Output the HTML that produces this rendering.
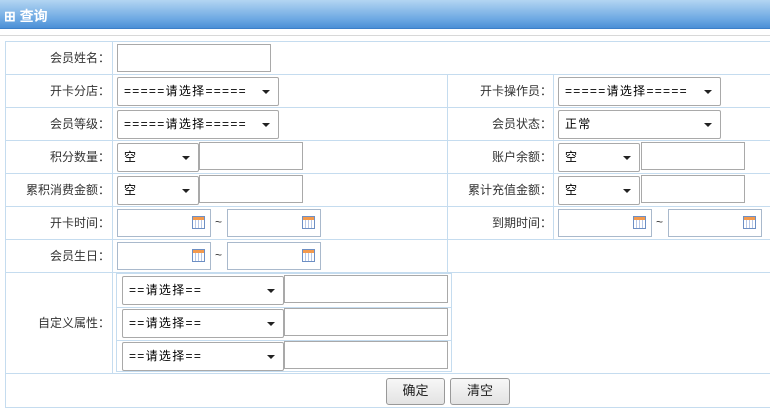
<!DOCTYPE html><html><head><meta charset="utf-8"><style>
*{box-sizing:border-box;margin:0;padding:0}
body{width:770px;height:414px;background:#fff;position:relative;overflow:hidden;font-family:"Liberation Sans","Noto Sans CJK SC",sans-serif;font-size:12px;color:#333}
.a{position:absolute}
.hd{left:0;top:0;width:770px;height:29px;background:linear-gradient(#b3d5f2,#6ba7e2 70%,#4b8fd6);border-bottom:1px solid #3c7fc8}
.hd span{position:absolute;left:4px;top:6px;color:#fff;font-weight:bold;font-size:14px}
.hl{height:1px;background:#c5dcef;left:5px;width:765px}
.vl{width:1px;background:#c5dcef}
.lb{text-align:right;width:100px;line-height:35px;height:33px}
.inp{border:1px solid #a9a9a9;background:#fff}
.sel{border:1px solid #a9a9a9;border-radius:2px;background:#fff;color:#000;line-height:27px;padding-left:6px;font-size:12px;letter-spacing:1.3px}
.sel:after{content:"";position:absolute;right:8px;top:12px;border:4px solid transparent;border-top:4px solid #222;border-bottom:0}
.dt{border:1px solid #a9b9cc;background:#fff}
.cal{position:absolute;right:5px;top:6px;width:13px;height:13px;border:1px solid #6d8fc4;background:repeating-linear-gradient(90deg,#fff 0 2px,#b8c8e6 2px 3px);}
.cal:before{content:"";position:absolute;left:0;top:0;width:11px;height:3px;background:#f39a4e}
.btn{border:1px solid #999;border-radius:3px;background:linear-gradient(#f7f7f7,#e3e3e3);text-align:center;line-height:24px;font-size:13px;color:#222}
</style></head><body>
<div class="a hd"><span>⊞ 查询</span></div>
<div class="a" style="left:0;top:35px;width:770px;height:1px;background:#d8d8d8"></div>
<div class="a hl" style="top:41px"></div>
<div class="a hl" style="top:74px"></div>
<div class="a hl" style="top:107px"></div>
<div class="a hl" style="top:140px"></div>
<div class="a hl" style="top:173px"></div>
<div class="a hl" style="top:206px"></div>
<div class="a hl" style="top:239px"></div>
<div class="a hl" style="top:272px"></div>
<div class="a hl" style="top:373px"></div>
<div class="a hl" style="top:407px"></div>
<div class="a vl" style="left:5px;top:41px;height:367px"></div>
<div class="a vl" style="left:112px;top:41px;height:332px"></div>
<div class="a vl" style="left:447px;top:74px;height:198px"></div>
<div class="a vl" style="left:553px;top:74px;height:165px"></div>
<div class="a" style="left:116px;top:273px;width:336px;height:99px;border:1px solid #c5dcef"></div>
<div class="a" style="left:117px;top:307px;width:334px;height:1px;background:#c5dcef"></div>
<div class="a" style="left:117px;top:340px;width:334px;height:1px;background:#c5dcef"></div>

<div class="a lb" style="left:10px;top:41px">会员姓名：</div>
<div class="a lb" style="left:10px;top:74px">开卡分店：</div>
<div class="a lb" style="left:10px;top:107px">会员等级：</div>
<div class="a lb" style="left:10px;top:140px">积分数量：</div>
<div class="a lb" style="left:10px;top:173px">累积消费金额：</div>
<div class="a lb" style="left:10px;top:206px">开卡时间：</div>
<div class="a lb" style="left:10px;top:239px">会员生日：</div>
<div class="a lb" style="left:10px;top:306px">自定义属性：</div>
<div class="a lb" style="left:452px;top:74px">开卡操作员：</div>
<div class="a lb" style="left:452px;top:107px">会员状态：</div>
<div class="a lb" style="left:452px;top:140px">账户余额：</div>
<div class="a lb" style="left:452px;top:173px">累计充值金额：</div>
<div class="a lb" style="left:452px;top:206px">到期时间：</div>

<div class="a inp" style="left:117px;top:44px;width:154px;height:28px"></div>
<div class="a sel" style="left:117px;top:77px;width:162px;height:29px">=====请选择=====</div>
<div class="a sel" style="left:117px;top:110px;width:162px;height:29px">=====请选择=====</div>
<div class="a sel" style="left:117px;top:143px;width:82px;height:29px">空</div>
<div class="a inp" style="left:199px;top:142px;width:104px;height:28px"></div>
<div class="a sel" style="left:117px;top:176px;width:82px;height:29px">空</div>
<div class="a inp" style="left:199px;top:175px;width:104px;height:28px"></div>
<div class="a sel" style="left:558px;top:77px;width:163px;height:29px">=====请选择=====</div>
<div class="a sel" style="left:558px;top:110px;width:163px;height:29px">正常</div>
<div class="a sel" style="left:558px;top:143px;width:82px;height:29px">空</div>
<div class="a inp" style="left:641px;top:142px;width:104px;height:28px"></div>
<div class="a sel" style="left:558px;top:176px;width:82px;height:29px">空</div>
<div class="a inp" style="left:641px;top:175px;width:104px;height:28px"></div>

<div class="a dt" style="left:117px;top:209px;width:94px;height:28px"><i class="cal"></i></div>
<div class="a" style="left:215px;top:215px">~</div>
<div class="a dt" style="left:227px;top:209px;width:94px;height:28px"><i class="cal"></i></div>
<div class="a dt" style="left:117px;top:242px;width:94px;height:28px"><i class="cal"></i></div>
<div class="a" style="left:215px;top:248px">~</div>
<div class="a dt" style="left:227px;top:242px;width:94px;height:28px"><i class="cal"></i></div>
<div class="a dt" style="left:558px;top:209px;width:94px;height:28px"><i class="cal"></i></div>
<div class="a" style="left:656px;top:215px">~</div>
<div class="a dt" style="left:668px;top:209px;width:94px;height:28px"><i class="cal"></i></div>

<div class="a sel" style="left:122px;top:276px;width:162px;height:29px">==请选择==</div>
<div class="a inp" style="left:284px;top:275px;width:164px;height:28px"></div>
<div class="a sel" style="left:122px;top:309px;width:162px;height:29px">==请选择==</div>
<div class="a inp" style="left:284px;top:308px;width:164px;height:28px"></div>
<div class="a sel" style="left:122px;top:342px;width:162px;height:29px">==请选择==</div>
<div class="a inp" style="left:284px;top:341px;width:164px;height:28px"></div>

<div class="a btn" style="left:386px;top:378px;width:59px;height:27px">确定</div>
<div class="a btn" style="left:450px;top:378px;width:60px;height:27px">清空</div>
</body></html>
